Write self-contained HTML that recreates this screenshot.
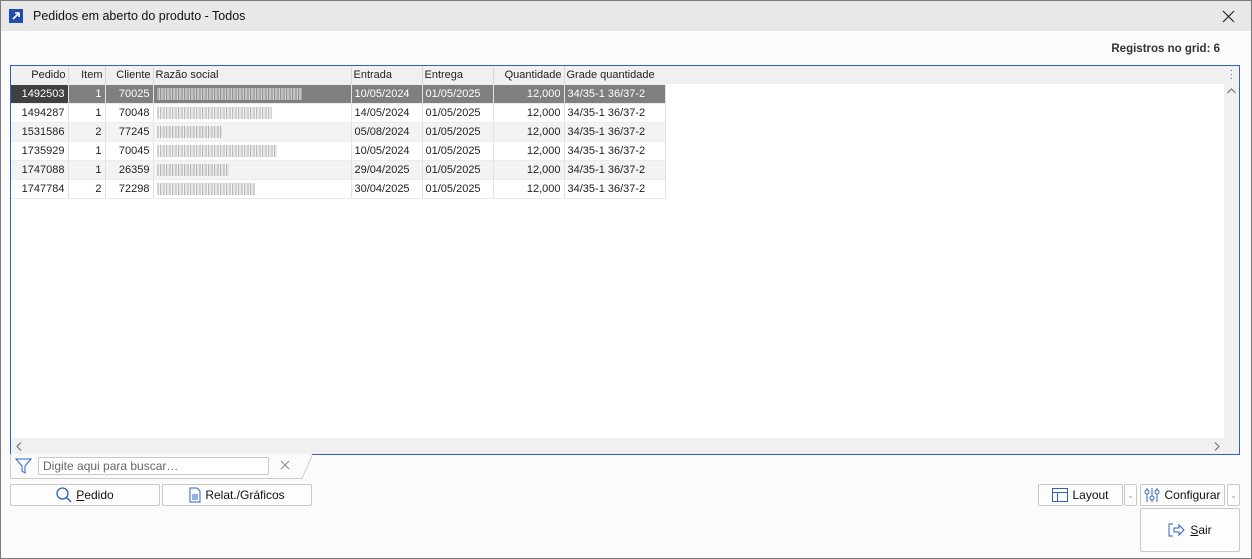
<!DOCTYPE html><html><head><meta charset="utf-8"><style>
*{box-sizing:border-box;margin:0;padding:0}
body{width:1252px;height:559px;overflow:hidden;font-family:"Liberation Sans",sans-serif;font-size:11px;color:#222;background:#fbfbfb;position:relative}
.frame{position:absolute;left:0;top:0;width:1252px;height:559px;border:1px solid #7a7a7a;pointer-events:none;z-index:5}
.title{position:absolute;left:1px;top:1px;width:1250px;height:30px;background:#e8e8e8}
.title .t{position:absolute;left:32px;top:8px;font-size:12.5px;color:#111}
.ico{position:absolute;left:8px;top:8px;width:14px;height:14px;background:#1f4fa8}
.abs{position:absolute}
.grid{position:absolute;left:10px;top:65px;width:1230px;height:390px;border:1px solid #2d62c0;background:#fff}
table{border-collapse:collapse;position:absolute;left:0;top:0;table-layout:fixed;width:654px}
td,th{height:19px;padding:0 3px;font-weight:normal;white-space:nowrap;overflow:hidden;border-right:1px solid #e2e2e2;border-bottom:1px solid #ececec}
th{background:#f0f0f0;height:18px;border-right:1px solid #d8d8d8;padding:0 2px}
.r{text-align:right}.l{text-align:left}
tr.alt td{background:#f3f3f3}
tr.sel td{background:#7f7f7f;color:#fff}
tr.sel td:first-child{background:#404040}
.blur{display:inline-block;height:12px;vertical-align:middle;background:repeating-linear-gradient(90deg,#bbb 0 2px,#eee 2px 3px,#999 3px 4px,#ddd 4px 6px);opacity:.7}
.btn{position:absolute;height:22px;border:1px solid #c8c8c8;border-radius:2px;background:#fdfdfd;font-size:12px;display:flex;align-items:center;justify-content:center;gap:4px;color:#111}
</style></head><body>
<div class="title"><div class="ico"><svg width="14" height="14"><path d="M4 10L10 4M6 4h4v4" stroke="#fff" stroke-width="1.6" fill="none"/></svg></div><div class="t">Pedidos em aberto do produto - Todos</div>
<svg class="abs" style="left:1221px;top:9px" width="13" height="13"><path d="M1 1L12 12M12 1L1 12" stroke="#222" stroke-width="1.2"/></svg></div>
<div class="abs" style="right:32px;top:43px;font-weight:bold;font-size:11.5px;color:#333">Registros no grid: 6</div>
<div class="grid">
<table>
<colgroup><col style="width:57px"><col style="width:37px"><col style="width:48px"><col style="width:198px"><col style="width:71px"><col style="width:71px"><col style="width:71px"><col style="width:101px"></colgroup>
<tr><th class="r">Pedido</th><th class="r">Item</th><th class="r">Cliente</th><th class="l">Razão social</th><th class="l">Entrada</th><th class="l">Entrega</th><th class="r">Quantidade</th><th class="l">Grade quantidade</th></tr>
<tr class="sel"><td class="r">1492503</td><td class="r">1</td><td class="r">70025</td><td><span class="blur" style="width:145px"></span></td><td>10/05/2024</td><td>01/05/2025</td><td class="r">12,000</td><td>34/35-1 36/37-2</td></tr>
<tr><td class="r">1494287</td><td class="r">1</td><td class="r">70048</td><td><span class="blur" style="width:115px"></span></td><td>14/05/2024</td><td>01/05/2025</td><td class="r">12,000</td><td>34/35-1 36/37-2</td></tr>
<tr class="alt"><td class="r">1531586</td><td class="r">2</td><td class="r">77245</td><td><span class="blur" style="width:65px"></span></td><td>05/08/2024</td><td>01/05/2025</td><td class="r">12,000</td><td>34/35-1 36/37-2</td></tr>
<tr><td class="r">1735929</td><td class="r">1</td><td class="r">70045</td><td><span class="blur" style="width:120px"></span></td><td>10/05/2024</td><td>01/05/2025</td><td class="r">12,000</td><td>34/35-1 36/37-2</td></tr>
<tr class="alt"><td class="r">1747088</td><td class="r">1</td><td class="r">26359</td><td><span class="blur" style="width:72px"></span></td><td>29/04/2025</td><td>01/05/2025</td><td class="r">12,000</td><td>34/35-1 36/37-2</td></tr>
<tr><td class="r">1747784</td><td class="r">2</td><td class="r">72298</td><td><span class="blur" style="width:98px"></span></td><td>30/04/2025</td><td>01/05/2025</td><td class="r">12,000</td><td>34/35-1 36/37-2</td></tr>
</table>
<div class="abs" style="left:654px;top:0;width:560px;height:18px;background:#f0f0f0"></div>
<div class="abs" style="right:0;top:0;width:15px;height:388px;background:#f0f0f0"></div>
<div class="abs" style="right:6px;top:3px;color:#2d62c0;font-size:10px;line-height:4px">·<br>·<br>·</div>
<svg class="abs" style="right:3px;top:22px" width="9" height="6"><path d="M0.5 5L4.5 1L8.5 5" stroke="#666" fill="none"/></svg>
<div class="abs" style="left:0;top:372px;width:1213px;height:16px;background:#f0f0f0"></div>
<svg class="abs" style="left:5px;top:376px" width="6" height="9"><path d="M5 0.5L1 4.5L5 8.5" stroke="#666" fill="none"/></svg>
<svg class="abs" style="left:1203px;top:376px" width="6" height="9"><path d="M1 0.5L5 4.5L1 8.5" stroke="#666" fill="none"/></svg>
</div>
<svg class="abs" style="left:10px;top:454px" width="302" height="26"><path d="M0.5 0V24.5H292L302 2V0" stroke="#ccc" fill="#fbfbfb"/><path d="M6 5h15l-6 7v7l-3-2v-5z" stroke="#2d62c0" fill="none"/><path d="M271 7l8 8M279 7l-8 8" stroke="#888"/></svg>
<div class="abs" style="left:38px;top:457px;width:231px;height:18px;border:1px solid #c8c8c8;border-radius:2px;background:#fff;color:#666;font-size:12px;padding:1px 4px">Digite aqui para buscar…</div>
<div class="btn" style="left:10px;top:484px;width:150px"><svg width="16" height="16"><circle cx="6.5" cy="6.5" r="5.5" stroke="#2d62c0" fill="none" stroke-width="1.3"/><path d="M10.5 10.5L15 15" stroke="#2d62c0" stroke-width="1.4"/></svg><span><u>P</u>edido</span></div>
<div class="btn" style="left:162px;top:484px;width:150px"><svg width="12" height="16"><path d="M1 1h7l3 3v11H1z" stroke="#2d62c0" fill="none"/><path d="M3 8h6M3 10h6M3 12h6" stroke="#2d62c0"/></svg><span>Relat./Gráficos</span></div>
<div class="btn" style="left:1038px;top:484px;width:85px"><svg width="16" height="14"><rect x="0.5" y="0.5" width="15" height="13" stroke="#2d62c0" fill="none"/><path d="M0.5 4.5h15M5.5 4.5v9" stroke="#2d62c0"/></svg><span>Layout</span></div>
<div class="btn" style="left:1124px;top:484px;width:13px;color:#8aa;font-size:8px">⌄</div>
<div class="btn" style="left:1140px;top:484px;width:85px"><svg width="16" height="16"><path d="M3 1v14M8 1v14M13 1v14" stroke="#2d62c0"/><circle cx="3" cy="5" r="2" fill="#fff" stroke="#2d62c0"/><circle cx="8" cy="11" r="2" fill="#fff" stroke="#2d62c0"/><circle cx="13" cy="5" r="2" fill="#fff" stroke="#2d62c0"/></svg><span>Configurar</span></div>
<div class="btn" style="left:1227px;top:484px;width:13px;color:#8aa;font-size:8px">⌄</div>
<div class="btn" style="left:1140px;top:508px;width:100px;height:44px"><svg width="18" height="14"><path d="M5 1H1v12h4" stroke="#2d62c0" fill="none"/><path d="M6 5h5V2l5 5-5 5V9H6z" stroke="#2d62c0" fill="none"/></svg><span><u>S</u>air</span></div>
<div class="frame"></div>
</body></html>
